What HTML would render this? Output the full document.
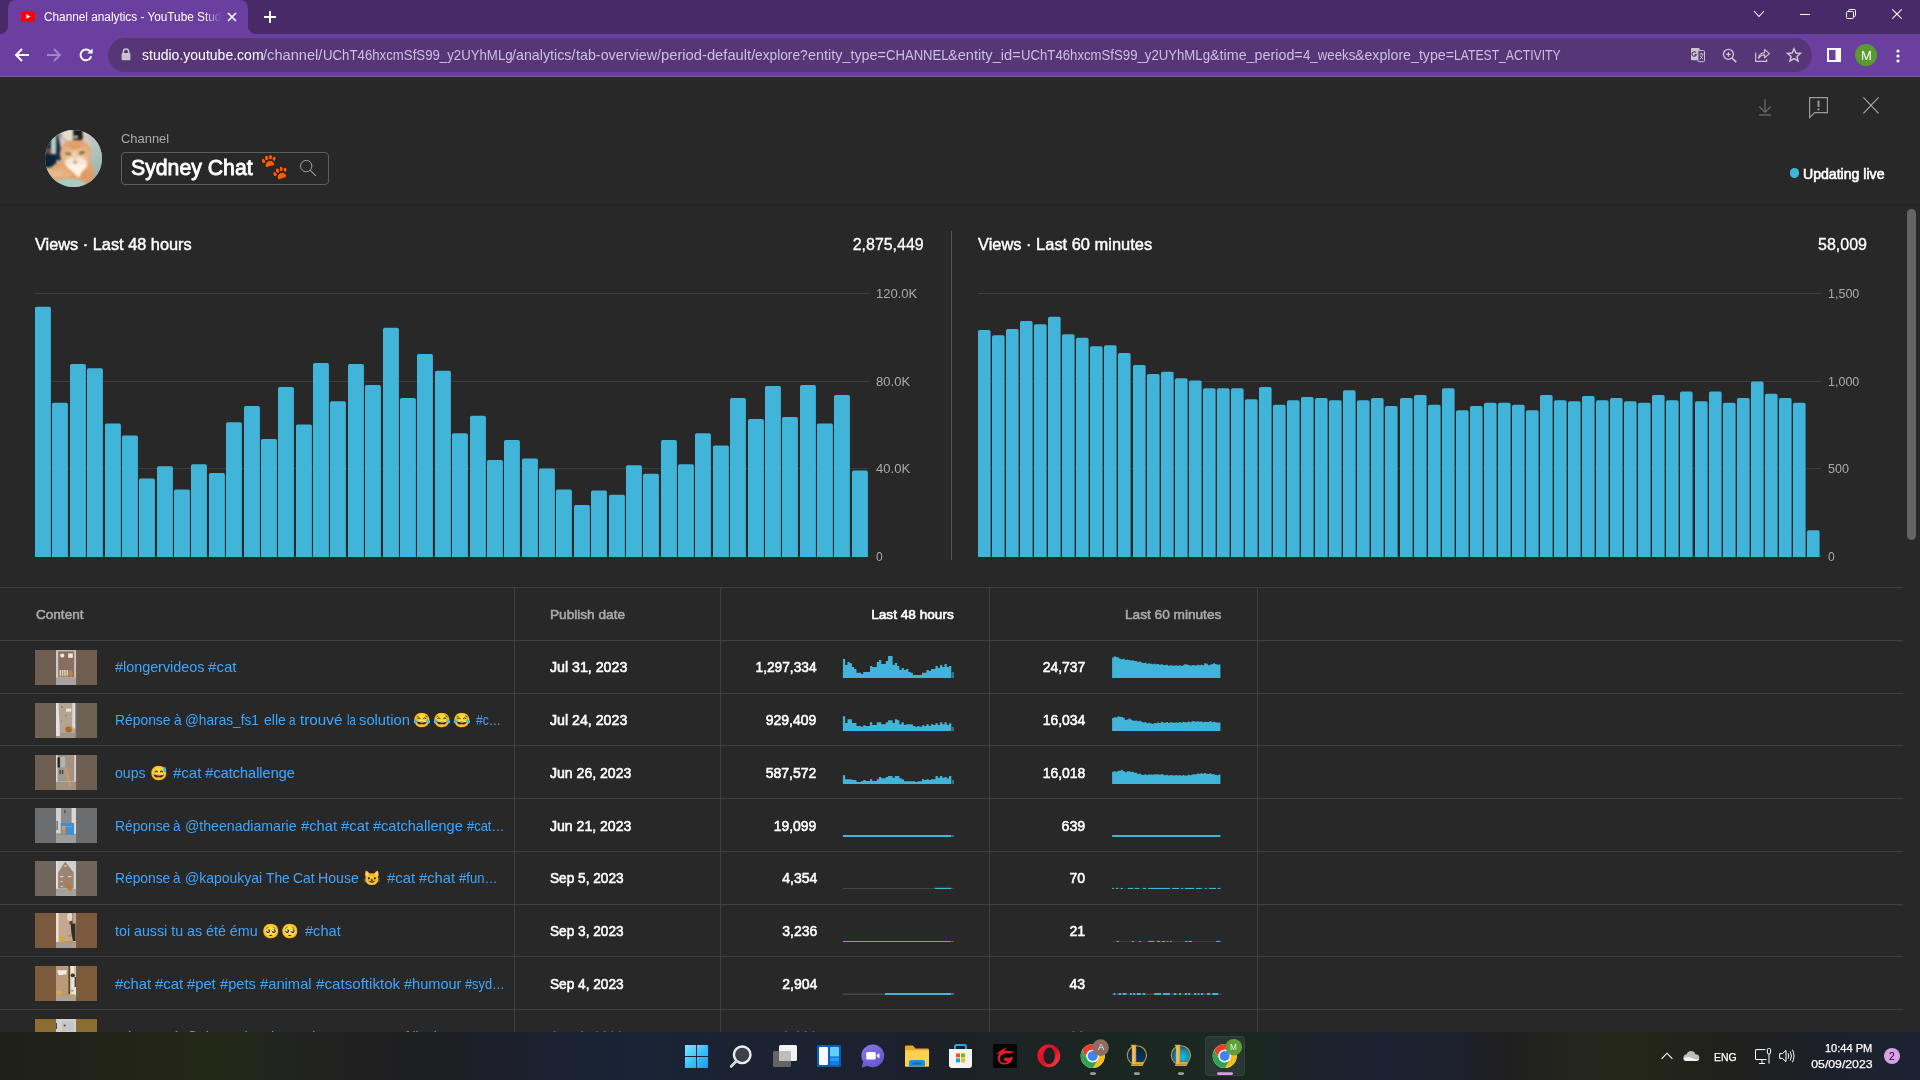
<!DOCTYPE html>
<html lang="en">
<head>
<meta charset="utf-8">
<title>Channel analytics - YouTube Studio</title>
<style>
*{box-sizing:border-box;margin:0;padding:0}
html,body{width:1920px;height:1080px;overflow:hidden;background:#282828}
body{font-family:"Liberation Sans","DejaVu Sans",sans-serif;color:#fff;position:relative;-webkit-font-smoothing:antialiased}
.abs{position:absolute}
.t{position:absolute;white-space:nowrap;line-height:40px;paint-order:stroke fill}
svg{position:absolute;overflow:visible}
/* browser chrome */
#tabstrip{left:0;top:0;width:1920px;height:34px;background:#472a67}
#toolbar{left:0;top:34px;width:1920px;height:42px;background:#6b3fa0}
#toolbarline{left:0;top:76px;width:1920px;height:1px;background:#7e55b0}
#tab{left:8px;top:0;width:240px;height:34px;background:#6b3fa0;border-radius:8px 8px 0 0}
.tabcurve{width:8px;height:8px;top:26px;background:radial-gradient(circle at 0 0,#472a67 7.5px,#6b3fa0 8px)}
#omni{left:108px;top:38px;width:1704px;height:34px;border-radius:17px;background:#573678}
.ui{font-family:"Liberation Sans","DejaVu Sans",sans-serif}
/* page */
#page{left:0;top:77px;width:1920px;height:955px;background:#282828;overflow:hidden}
.hl{position:absolute;height:1px;background:#3e3e3e}
.vl{position:absolute;width:1px;background:#3e3e3e}
.sg span{display:inline-block;white-space:pre}
.sg .emo{text-align:center;font-size:14.2px;position:relative;top:-0.5px;-webkit-text-stroke:0;font-family:"Noto Color Emoji","Liberation Sans","DejaVu Sans",sans-serif}
.paw{font-family:"Noto Color Emoji","Liberation Sans","DejaVu Sans",sans-serif;filter:hue-rotate(184deg) saturate(2.0) brightness(1.2) drop-shadow(0 0 0.5px #000) drop-shadow(0 0 0.5px #000)}
/* taskbar */
#taskbar{left:0;top:1032px;width:1920px;height:48px;background:linear-gradient(90deg,#1f2017 0px,#212318 100px,#242816 220px,#222420 290px,#202020 350px,#1e1f22 440px,#1c202c 510px,#1a2234 580px,#1a2436 640px,#1b2232 760px,#1b212e 880px,#1c2126 960px,#1b2423 1040px,#1a2722 1150px,#1b2822 1260px,#1c222b 1310px,#1c2231 1380px,#1d212d 1450px,#201f20 1510px,#24251b 1570px,#25261a 1640px,#212219 1700px,#1f2020 1760px,#1c2028 1820px,#1b2232 1920px)}
</style>
</head>
<body>
<!-- ===== Browser chrome ===== -->
<div id="tabstrip" class="abs"></div>
<div id="toolbar" class="abs"></div>
<div id="toolbarline" class="abs"></div>
<div id="tab" class="abs"></div>
<div class="abs tabcurve" style="left:0;background:radial-gradient(circle at 0 0,#472a67 7.5px,#6b3fa0 8.5px)"></div>
<div class="abs tabcurve" style="left:248px;background:radial-gradient(circle at 100% 0,#472a67 7.5px,#6b3fa0 8.5px)"></div>
<!-- favicon -->
<svg style="left:21px;top:11px" width="14" height="11" viewBox="0 0 14 11"><rect x="0" y="0.3" width="14" height="10.4" rx="2.6" fill="#f00"/><path d="M5.4 3.1 L9.3 5.5 L5.4 7.9Z" fill="#fff"/></svg>
<div class="t ui" style="top:-3px;font-size:12.5px;color:#fff;left:44.00px;transform-origin:0 24px;transform:scaleX(0.9439);-webkit-mask-image:linear-gradient(90deg,#000 170px,transparent 188px);mask-image:linear-gradient(90deg,#000 170px,transparent 188px);">Channel analytics - YouTube Studio</div>
<svg style="left:227px;top:12px" width="10" height="10" viewBox="0 0 10 10"><path d="M1 1 L9 9 M9 1 L1 9" stroke="#fff" stroke-width="1.6" fill="none"/></svg>
<svg style="left:264px;top:11px" width="12" height="12" viewBox="0 0 12 12"><path d="M6 0 V12 M0 6 H12" stroke="#fff" stroke-width="2" fill="none"/></svg>
<!-- window controls -->
<svg style="left:1753px;top:10px" width="12" height="8" viewBox="0 0 12 8"><path d="M1 1 L6 6.5 L11 1" stroke="#fff" stroke-width="1.1" fill="none"/></svg>
<svg style="left:1800px;top:14px" width="10" height="1" viewBox="0 0 10 1"><rect width="10" height="1" fill="#fff"/></svg>
<svg style="left:1846px;top:9px" width="10" height="10" viewBox="0 0 10 10"><rect x="0.5" y="2.5" width="7" height="7" rx="1.2" stroke="#fff" stroke-width="1" fill="none"/><path d="M2.5 2.5 V1.7 Q2.5 0.5 3.7 0.5 H8.3 Q9.5 0.5 9.5 1.7 V6.3 Q9.5 7.5 8.3 7.5 H7.5" stroke="#fff" stroke-width="1" fill="none"/></svg>
<svg style="left:1892px;top:9px" width="10" height="10" viewBox="0 0 10 10"><path d="M0.3 0.3 L9.7 9.7 M9.7 0.3 L0.3 9.7" stroke="#fff" stroke-width="1.1" fill="none"/></svg>
<!-- nav buttons -->
<svg style="left:15px;top:48px" width="14" height="14" viewBox="0 0 14 14"><path d="M14 7 H2 M7 1 L1 7 L7 13" stroke="#fff" stroke-width="1.9" fill="none"/></svg>
<svg style="left:47px;top:48px" width="14" height="14" viewBox="0 0 14 14"><path d="M0 7 H12 M7 1 L13 7 L7 13" stroke="#a287c6" stroke-width="1.9" fill="none"/></svg>
<svg style="left:79px;top:48px" width="14" height="14" viewBox="0 0 14 14"><path d="M12.2 8.2 A5.4 5.4 0 1 1 10.9 3.2" stroke="#fff" stroke-width="1.9" fill="none"/><path d="M8.3 5.6 H13.6 V0.4Z" fill="#fff"/></svg>
<!-- omnibox -->
<div id="omni" class="abs"></div>
<svg style="left:121px;top:48px" width="10" height="13" viewBox="0 0 10 13"><rect x="0.6" y="5" width="8.8" height="7.2" rx="1" fill="#c9c3d1"/><path d="M2.4 5.4 V3.6 A2.6 2.6 0 0 1 7.6 3.6 V5.4" stroke="#c9c3d1" stroke-width="1.5" fill="none"/></svg>
<div class="t sg ui" style="top:35px;font-size:14.5px;color:#cdbfe0;left:141.70px;"><span style="width:121.60px;transform:scaleX(0.9670);transform-origin:0 25px;color:#fff">studio.youtube.com</span><span style="width:59.40px;transform:scaleX(1.0092);transform-origin:0 25px;">/channel/</span><span style="width:189.60px;transform:scaleX(0.9118);transform-origin:0 25px;">UChT46hxcmSfS99_y2UYhMLg</span><span style="width:63.40px;transform:scaleX(0.9832);transform-origin:0 25px;">/analytics/</span><span style="width:85.00px;transform:scaleX(0.9857);transform-origin:0 25px;">tab-overview/</span><span style="width:94.30px;transform:scaleX(1.0172);transform-origin:0 25px;">period-default/</span><span style="width:52.70px;transform:scaleX(0.9474);transform-origin:0 25px;">explore?</span><span style="width:78.00px;transform:scaleX(0.9922);transform-origin:0 25px;">entity_type=</span><span style="width:62.60px;transform:scaleX(0.9034);transform-origin:0 25px;">CHANNEL</span><span style="width:72.70px;transform:scaleX(1.0075);transform-origin:0 25px;">&amp;entity_id=</span><span style="width:189.00px;transform:scaleX(0.9089);transform-origin:0 25px;">UChT46hxcmSfS99_y2UYhMLg</span><span style="width:92.70px;transform:scaleX(0.9872);transform-origin:0 25px;">&amp;time_period=</span><span style="width:52.30px;transform:scaleX(0.9138);transform-origin:0 25px;">4_weeks</span><span style="width:99.00px;transform:scaleX(0.9785);transform-origin:0 25px;">&amp;explore_type=</span><span style="width:106.60px;transform:scaleX(0.8391);transform-origin:0 25px;">LATEST_ACTIVITY</span></div>
<!-- omnibox right icons -->
<svg style="left:1691px;top:47.8px" width="14" height="14.2" viewBox="0 0 14 14.2"><rect x="0" y="0" width="8.6" height="12.2" rx="1" fill="#c9c6cd"/><rect x="6.9" y="2.6" width="6.6" height="11.1" rx="1" fill="#573678" stroke="#c9c6cd" stroke-width="1"/><path d="M8.6 6 H12.4 M10.4 5 V6 M8.8 11.4 Q11.2 9.6 11.8 6.2 M9.2 7.6 Q10.2 10 12.2 11.4" stroke="#c9c6cd" stroke-width="0.9" fill="none"/><path d="M4.9 4.6 A2.2 2.2 0 1 0 5.3 6.6 H3.6" stroke="#573678" stroke-width="1.1" fill="none"/></svg>
<svg style="left:1722px;top:47.5px" width="15" height="15" viewBox="0 0 15 15"><circle cx="6.4" cy="6.3" r="5" stroke="#c9c6cd" stroke-width="1.35" fill="none"/><path d="M10 10 L14.2 14.2" stroke="#c9c6cd" stroke-width="1.7"/><path d="M4 6.3 H8.8 M6.4 3.9 V8.7" stroke="#c9c6cd" stroke-width="1.2"/></svg>
<svg style="left:1755px;top:48px" width="15" height="14" viewBox="0 0 15 14"><path d="M0.7 4.4 V13.3 H11.6 V11.2" stroke="#c9c6cd" stroke-width="1.2" fill="none"/><path d="M3.6 10.4 Q4 5.2 9.6 4.6 V1.4 L14.4 5.6 L9.6 9.8 V6.9 Q5.8 7 3.6 10.4Z" stroke="#c9c6cd" stroke-width="1.15" fill="none" stroke-linejoin="round"/></svg>
<svg style="left:1786px;top:47px" width="16" height="16" viewBox="0 0 16 16"><path d="M8 1.8 L9.9 6 L14.4 6.4 L11 9.4 L12 13.9 L8 11.5 L4 13.9 L5 9.4 L1.6 6.4 L6.1 6Z" stroke="#c9c6cd" stroke-width="1.5" fill="none" stroke-linejoin="miter"/></svg>
<!-- side panel, avatar, menu -->
<svg style="left:1827px;top:48px" width="14" height="14" viewBox="0 0 14 14"><rect x="0" y="0" width="14" height="14" fill="#fff"/><rect x="2" y="2" width="6.5" height="10" fill="#6b3fa0"/></svg>
<div class="abs" style="left:1855px;top:44px;width:22px;height:22px;border-radius:50%;background:#5a9b30"></div>
<div class="t ui" style="top:36px;font-size:13px;color:#fff;left:1860.60px;transform-origin:0 24px;transform:scaleX(0.9960);">M</div>
<svg style="left:1896.4px;top:48.6px" width="4" height="14" viewBox="0 0 4 14"><circle cx="2" cy="2" r="1.6" fill="#fff"/><circle cx="2" cy="7" r="1.6" fill="#fff"/><circle cx="2" cy="12" r="1.6" fill="#fff"/></svg>

<div id="page" class="abs"></div>
<!-- ===== Page header ===== -->
<div class="abs" style="left:45.2px;top:129.6px;width:57.1px;height:57.7px;border-radius:50%;overflow:hidden;background:#b9c7c0"><svg style="left:-4px;top:-4px;filter:blur(0.8px)" width="65.1" height="65.7" viewBox="19.6 9.6 1063.8 1073.8">
<defs>
<clipPath id="avc"><ellipse cx="551.5" cy="546.5" rx="466.5" ry="471.5"/></clipPath>
<filter id="avb" x="-20%" y="-20%" width="140%" height="140%"><feGaussianBlur stdDeviation="13"/></filter>
<filter id="avb2" x="-20%" y="-20%" width="140%" height="140%"><feGaussianBlur stdDeviation="8"/></filter>
<linearGradient id="avbg" x1="0" y1="0" x2="1" y2="1"><stop offset="0" stop-color="#cfd3c9"/><stop offset="0.55" stop-color="#b9c7c0"/><stop offset="1" stop-color="#7ea59d"/></linearGradient>
<radialGradient id="avhead" cx="0.5" cy="0.62" r="0.6"><stop offset="0" stop-color="#f3dcc4"/><stop offset="0.45" stop-color="#ecc09a"/><stop offset="1" stop-color="#e0a06c"/></radialGradient>
</defs>
<g>
<rect x="0" y="0" width="1100" height="1100" fill="url(#avbg)"/>
<g>
<rect x="60" y="130" width="130" height="560" fill="#10263a"/>
<rect x="180" y="170" width="95" height="400" fill="#b7cbc6"/>
<rect x="268" y="150" width="80" height="420" fill="#13283c"/>
<rect x="90" y="375" width="95" height="90" fill="#6f4b3c"/>
<rect x="70" y="470" width="200" height="200" fill="#0b2239"/>
<rect x="385" y="60" width="170" height="190" fill="#e6decd"/>
<rect x="545" y="60" width="160" height="185" fill="#1b1a19"/>
<ellipse cx="590" cy="190" rx="42" ry="20" fill="#dcdcd9"/>
<rect x="700" y="60" width="120" height="120" fill="#dad3c7"/>
<path d="M296 150 L470 255 L345 400Z" fill="#c3b0a9"/>
<path d="M330 200 L430 265 L360 350Z" fill="#d9c8c2"/>
<path d="M680 230 L795 135 L835 340Z" fill="#dcc6bc"/>
<path d="M120 780 Q180 640 350 590 L830 590 Q900 700 885 870 L700 960 L260 905Z" fill="#e3a36e"/>
<ellipse cx="585" cy="465" rx="258" ry="232" fill="url(#avhead)"/>
<ellipse cx="575" cy="320" rx="120" ry="62" fill="#e3a06a"/>
<ellipse cx="590" cy="610" rx="185" ry="85" fill="#f6e9da"/>
<path d="M410 650 L790 640 L640 850Z" fill="#fef4e6"/>
<ellipse cx="290" cy="770" rx="160" ry="78" fill="#ebb88c"/>
<ellipse cx="430" cy="800" rx="90" ry="50" fill="#e9b080"/>
<ellipse cx="770" cy="830" rx="105" ry="115" fill="#df9d68"/>
<ellipse cx="470" cy="965" rx="275" ry="98" fill="#aacac3"/>
</g>
<g>
<ellipse cx="465" cy="462" rx="50" ry="22" fill="#7a6524" transform="rotate(12 465 462)"/>
<ellipse cx="684" cy="448" rx="52" ry="23" fill="#6f5d20" transform="rotate(-16 684 448)"/>
<path d="M385 470 L540 490 M610 480 L780 455" stroke="#cf9a63" stroke-width="10" fill="none"/>
<path d="M538 585 L618 585 L578 636Z" fill="#cf8170"/>
<path d="M578 500 V590" stroke="#e9c3a0" stroke-width="34"/>
<path d="M535 340 V410 M575 335 V415 M615 340 V410 M495 350 V400 M655 350 V400" stroke="#cf8d55" stroke-width="11"/>
<path d="M200 720 Q300 690 400 740 M640 880 Q740 800 860 830" stroke="#d18e57" stroke-width="12" fill="none"/>
</g>
</g>
</svg></div>

<div class="t" style="top:119px;font-size:13.5px;color:#aaa;left:121.30px;transform-origin:0 24px;transform:scaleX(0.9583);">Channel</div>
<div class="abs" style="left:121px;top:152px;width:208px;height:33px;border:1px solid #5e5e5e;border-radius:4px"></div>
<div class="t sg" style="top:148px;font-size:22.5px;color:#fff;-webkit-text-stroke:0.9px #fff;left:131.20px;"><span style="width:121.60px;transform:scaleX(0.9439);transform-origin:0 27px;">Sydney Chat</span><span style="width:7.20px;"> </span><span class="paw" style="width:28.00px;font-size:23px;text-align:center;position:relative;top:-1.2px;left:0;-webkit-text-stroke:0;transform:scaleY(1.1)">🐾</span></div>
<svg style="left:299px;top:159px" width="18" height="18" viewBox="0 0 18 18"><circle cx="7.2" cy="7.1" r="5.7" stroke="#a0a0a0" stroke-width="1" fill="none"/><path d="M11.3 11.3 L16.8 16.8" stroke="#a0a0a0" stroke-width="1.1"/></svg>
<svg style="left:1758px;top:98px" width="14" height="18" viewBox="0 0 14 18"><path d="M7 1 V14 M1.3 8.6 L7 14.3 L12.7 8.6" stroke="#717171" stroke-width="1.1" fill="none"/><path d="M1 17 H13" stroke="#717171" stroke-width="1.2"/></svg>
<svg style="left:1809px;top:97px" width="19" height="22" viewBox="0 0 19 22"><path d="M0.6 0.6 H18.4 V15.6 H5.6 L0.6 20.6Z" stroke="#9a9a9a" stroke-width="1.2" fill="none"/><path d="M9.5 3.6 V10" stroke="#9a9a9a" stroke-width="2"/><path d="M9.5 11.4 V13.4" stroke="#9a9a9a" stroke-width="2"/></svg>
<svg style="left:1863px;top:97px" width="16" height="17" viewBox="0 0 16 17"><path d="M0.4 0.4 L15.6 16.4 M15.6 0.4 L0.4 16.4" stroke="#aaa" stroke-width="1.1" fill="none"/></svg>
<div class="abs" style="left:1789.6px;top:168.4px;width:9.2px;height:9.2px;border-radius:50%;background:#41b4d9"></div>
<div class="t" style="top:154px;font-size:14.5px;color:#fff;-webkit-text-stroke:0.6px #fff;left:1802.80px;transform-origin:0 25px;transform:scaleX(0.9722);">Updating live</div>
<div class="abs" style="left:0;top:203px;width:1920px;height:4px;background:linear-gradient(180deg,rgba(0,0,0,0),rgba(0,0,0,0.09) 60%,rgba(0,0,0,0))"></div>
<div class="abs" style="left:1907px;top:209px;width:9px;height:331px;border-radius:4.5px;background:#646464"></div>
<!-- ===== Charts ===== -->
<div class="t" style="top:225px;font-size:17px;color:#fff;-webkit-text-stroke:0.45px #fff;left:35.30px;transform-origin:0 25px;transform:scaleX(0.9603);">Views · Last 48 hours</div>
<div class="t" style="top:225px;font-size:17px;color:#fff;-webkit-text-stroke:0.3px #fff;right:995.90px;transform-origin:100% 25px;transform:scaleX(0.9373);">2,875,449</div>
<div class="t" style="top:225px;font-size:17px;color:#fff;-webkit-text-stroke:0.45px #fff;left:978.40px;transform-origin:0 25px;transform:scaleX(0.9663);">Views · Last 60 minutes</div>
<div class="t" style="top:225px;font-size:17px;color:#fff;-webkit-text-stroke:0.3px #fff;right:52.70px;transform-origin:100% 25px;transform:scaleX(0.9423);">58,009</div>
<div class="vl" style="left:951px;top:231px;height:329px;background:#555"></div>
<div class="hl" style="left:35px;top:292.5px;width:833.5px;background:#3d3d3d"></div>
<div class="t" style="top:274px;font-size:13.5px;color:#aaa;left:875.70px;transform-origin:0 24px;transform:scaleX(0.9627);">120.0K</div>
<div class="hl" style="left:35px;top:380.5px;width:833.5px;background:#3d3d3d"></div>
<div class="t" style="top:362px;font-size:13.5px;color:#aaa;left:875.70px;transform-origin:0 24px;transform:scaleX(0.9665);">80.0K</div>
<div class="hl" style="left:35px;top:468.0px;width:833.5px;background:#3d3d3d"></div>
<div class="t" style="top:449px;font-size:13.5px;color:#aaa;left:875.70px;transform-origin:0 24px;transform:scaleX(0.9665);">40.0K</div>
<div class="hl" style="left:35px;top:555.5px;width:833.5px;background:#3d3d3d"></div>
<div class="t" style="top:537px;font-size:13.5px;color:#aaa;left:875.70px;transform-origin:0 24px;transform:scaleX(0.8915);">0</div>
<div class="hl" style="left:978px;top:292.5px;width:842.5px;background:#3d3d3d"></div>
<div class="t" style="top:274px;font-size:13.5px;color:#aaa;left:1828.00px;transform-origin:0 24px;transform:scaleX(0.9261);">1,500</div>
<div class="hl" style="left:978px;top:380.5px;width:842.5px;background:#3d3d3d"></div>
<div class="t" style="top:362px;font-size:13.5px;color:#aaa;left:1828.00px;transform-origin:0 24px;transform:scaleX(0.9261);">1,000</div>
<div class="hl" style="left:978px;top:468.0px;width:842.5px;background:#3d3d3d"></div>
<div class="t" style="top:449px;font-size:13.5px;color:#aaa;left:1828.00px;transform-origin:0 24px;transform:scaleX(0.9320);">500</div>
<div class="hl" style="left:978px;top:555.5px;width:842.5px;background:#3d3d3d"></div>
<div class="t" style="top:537px;font-size:13.5px;color:#aaa;left:1828.00px;transform-origin:0 24px;transform:scaleX(0.8915);">0</div>
<svg style="left:0;top:0" width="1920" height="600" viewBox="0 0 1920 600"><path d="M35.00 557.0V308.5Q35.00 306.8 36.70 306.8H49.20Q50.90 306.8 50.90 308.5V557.0ZM52.00 557.0V404.4Q52.00 402.7 53.70 402.7H66.20Q67.90 402.7 67.90 404.4V557.0ZM70.00 557.0V365.7Q70.00 364.0 71.70 364.0H84.20Q85.90 364.0 85.90 365.7V557.0ZM87.00 557.0V370.0Q87.00 368.3 88.70 368.3H101.20Q102.90 368.3 102.90 370.0V557.0ZM105.00 557.0V425.1Q105.00 423.4 106.70 423.4H119.20Q120.90 423.4 120.90 425.1V557.0ZM122.00 557.0V437.1Q122.00 435.4 123.70 435.4H136.20Q137.90 435.4 137.90 437.1V557.0ZM139.00 557.0V480.1Q139.00 478.4 140.70 478.4H153.20Q154.90 478.4 154.90 480.1V557.0ZM157.00 557.0V468.0Q157.00 466.3 158.70 466.3H171.20Q172.90 466.3 172.90 468.0V557.0ZM174.00 557.0V491.1Q174.00 489.4 175.70 489.4H188.20Q189.90 489.4 189.90 491.1V557.0ZM191.00 557.0V465.9Q191.00 464.2 192.70 464.2H205.20Q206.90 464.2 206.90 465.9V557.0ZM209.00 557.0V474.7Q209.00 473.0 210.70 473.0H223.20Q224.90 473.0 224.90 474.7V557.0ZM226.00 557.0V424.0Q226.00 422.3 227.70 422.3H240.20Q241.90 422.3 241.90 424.0V557.0ZM244.00 557.0V407.6Q244.00 405.9 245.70 405.9H258.20Q259.90 405.9 259.90 407.6V557.0ZM261.00 557.0V440.6Q261.00 438.9 262.70 438.9H275.20Q276.90 438.9 276.90 440.6V557.0ZM278.00 557.0V388.8Q278.00 387.1 279.70 387.1H292.20Q293.90 387.1 293.90 388.8V557.0ZM296.00 557.0V426.1Q296.00 424.4 297.70 424.4H310.20Q311.90 424.4 311.90 426.1V557.0ZM313.00 557.0V364.7Q313.00 363.0 314.70 363.0H327.20Q328.90 363.0 328.90 364.7V557.0ZM330.00 557.0V403.0Q330.00 401.3 331.70 401.3H344.20Q345.90 401.3 345.90 403.0V557.0ZM348.00 557.0V365.7Q348.00 364.0 349.70 364.0H362.20Q363.90 364.0 363.90 365.7V557.0ZM365.00 557.0V386.7Q365.00 385.0 366.70 385.0H379.20Q380.90 385.0 380.90 386.7V557.0ZM383.00 557.0V329.5Q383.00 327.8 384.70 327.8H397.20Q398.90 327.8 398.90 329.5V557.0ZM400.00 557.0V399.8Q400.00 398.1 401.70 398.1H414.20Q415.90 398.1 415.90 399.8V557.0ZM417.00 557.0V355.8Q417.00 354.1 418.70 354.1H431.20Q432.90 354.1 432.90 355.8V557.0ZM435.00 557.0V372.4Q435.00 370.7 436.70 370.7H449.20Q450.90 370.7 450.90 372.4V557.0ZM452.00 557.0V435.0Q452.00 433.3 453.70 433.3H466.20Q467.90 433.3 467.90 435.0V557.0ZM470.00 557.0V417.5Q470.00 415.8 471.70 415.8H484.20Q485.90 415.8 485.90 417.5V557.0ZM487.00 557.0V461.6Q487.00 459.9 488.70 459.9H501.20Q502.90 459.9 502.90 461.6V557.0ZM504.00 557.0V441.7Q504.00 440.0 505.70 440.0H518.20Q519.90 440.0 519.90 441.7V557.0ZM522.00 557.0V460.2Q522.00 458.5 523.70 458.5H536.20Q537.90 458.5 537.90 460.2V557.0ZM539.00 557.0V470.2Q539.00 468.5 540.70 468.5H553.20Q554.90 468.5 554.90 470.2V557.0ZM556.00 557.0V491.1Q556.00 489.4 557.70 489.4H570.20Q571.90 489.4 571.90 491.1V557.0ZM574.00 557.0V506.7Q574.00 505.0 575.70 505.0H588.20Q589.90 505.0 589.90 506.7V557.0ZM591.00 557.0V492.2Q591.00 490.5 592.70 490.5H605.20Q606.90 490.5 606.90 492.2V557.0ZM609.00 557.0V496.5Q609.00 494.8 610.70 494.8H623.20Q624.90 494.8 624.90 496.5V557.0ZM626.00 557.0V466.9Q626.00 465.2 627.70 465.2H640.20Q641.90 465.2 641.90 466.9V557.0ZM643.00 557.0V475.5Q643.00 473.8 644.70 473.8H657.20Q658.90 473.8 658.90 475.5V557.0ZM661.00 557.0V441.7Q661.00 440.0 662.70 440.0H675.20Q676.90 440.0 676.90 441.7V557.0ZM678.00 557.0V465.9Q678.00 464.2 679.70 464.2H692.20Q693.90 464.2 693.90 465.9V557.0ZM695.00 557.0V435.0Q695.00 433.3 696.70 433.3H709.20Q710.90 433.3 710.90 435.0V557.0ZM713.00 557.0V447.1Q713.00 445.4 714.70 445.4H727.20Q728.90 445.4 728.90 447.1V557.0ZM730.00 557.0V399.8Q730.00 398.1 731.70 398.1H744.20Q745.90 398.1 745.90 399.8V557.0ZM748.00 557.0V420.8Q748.00 419.1 749.70 419.1H762.20Q763.90 419.1 763.90 420.8V557.0ZM765.00 557.0V387.7Q765.00 386.0 766.70 386.0H779.20Q780.90 386.0 780.90 387.7V557.0ZM782.00 557.0V418.6Q782.00 416.9 783.70 416.9H796.20Q797.90 416.9 797.90 418.6V557.0ZM800.00 557.0V386.7Q800.00 385.0 801.70 385.0H814.20Q815.90 385.0 815.90 386.7V557.0ZM817.00 557.0V425.1Q817.00 423.4 818.70 423.4H831.20Q832.90 423.4 832.90 425.1V557.0ZM834.00 557.0V396.6Q834.00 394.9 835.70 394.9H848.20Q849.90 394.9 849.90 396.6V557.0ZM852.00 557.0V472.3Q852.00 470.6 853.70 470.6H866.20Q867.90 470.6 867.90 472.3V557.0Z" fill="#41b4d9"/></svg>
<svg style="left:0;top:0" width="1920" height="600" viewBox="0 0 1920 600"><path d="M978.00 557.0V331.6Q978.00 329.9 979.70 329.9H988.90Q990.60 329.9 990.60 331.6V557.0ZM992.00 557.0V337.0Q992.00 335.3 993.70 335.3H1002.90Q1004.60 335.3 1004.60 337.0V557.0ZM1006.00 557.0V330.6Q1006.00 328.9 1007.70 328.9H1016.90Q1018.60 328.9 1018.60 330.6V557.0ZM1020.00 557.0V322.8Q1020.00 321.1 1021.70 321.1H1030.90Q1032.60 321.1 1032.60 322.8V557.0ZM1034.00 557.0V326.0Q1034.00 324.3 1035.70 324.3H1044.90Q1046.60 324.3 1046.60 326.0V557.0ZM1048.00 557.0V318.5Q1048.00 316.8 1049.70 316.8H1058.90Q1060.60 316.8 1060.60 318.5V557.0ZM1062.00 557.0V335.9Q1062.00 334.2 1063.70 334.2H1072.90Q1074.60 334.2 1074.60 335.9V557.0ZM1076.00 557.0V339.4Q1076.00 337.7 1077.70 337.7H1086.90Q1088.60 337.7 1088.60 339.4V557.0ZM1090.00 557.0V348.0Q1090.00 346.3 1091.70 346.3H1100.90Q1102.60 346.3 1102.60 348.0V557.0ZM1104.00 557.0V346.9Q1104.00 345.2 1105.70 345.2H1114.90Q1116.60 345.2 1116.60 346.9V557.0ZM1118.00 557.0V354.7Q1118.00 353.0 1119.70 353.0H1128.90Q1130.60 353.0 1130.60 354.7V557.0ZM1133.00 557.0V366.8Q1133.00 365.1 1134.70 365.1H1143.90Q1145.60 365.1 1145.60 366.8V557.0ZM1147.00 557.0V375.7Q1147.00 374.0 1148.70 374.0H1157.90Q1159.60 374.0 1159.60 375.7V557.0ZM1161.00 557.0V373.5Q1161.00 371.8 1162.70 371.8H1171.90Q1173.60 371.8 1173.60 373.5V557.0ZM1175.00 557.0V380.0Q1175.00 378.3 1176.70 378.3H1185.90Q1187.60 378.3 1187.60 380.0V557.0ZM1189.00 557.0V382.1Q1189.00 380.4 1190.70 380.4H1199.90Q1201.60 380.4 1201.60 382.1V557.0ZM1203.00 557.0V389.9Q1203.00 388.2 1204.70 388.2H1213.90Q1215.60 388.2 1215.60 389.9V557.0ZM1217.00 557.0V389.9Q1217.00 388.2 1218.70 388.2H1227.90Q1229.60 388.2 1229.60 389.9V557.0ZM1231.00 557.0V389.9Q1231.00 388.2 1232.70 388.2H1241.90Q1243.60 388.2 1243.60 389.9V557.0ZM1245.00 557.0V400.9Q1245.00 399.2 1246.70 399.2H1255.90Q1257.60 399.2 1257.60 400.9V557.0ZM1259.00 557.0V388.8Q1259.00 387.1 1260.70 387.1H1269.90Q1271.60 387.1 1271.60 388.8V557.0ZM1273.00 557.0V406.5Q1273.00 404.8 1274.70 404.8H1283.90Q1285.60 404.8 1285.60 406.5V557.0ZM1287.00 557.0V402.0Q1287.00 400.3 1288.70 400.3H1297.90Q1299.60 400.3 1299.60 402.0V557.0ZM1301.00 557.0V398.7Q1301.00 397.0 1302.70 397.0H1311.90Q1313.60 397.0 1313.60 398.7V557.0ZM1315.00 557.0V399.8Q1315.00 398.1 1316.70 398.1H1325.90Q1327.60 398.1 1327.60 399.8V557.0ZM1329.00 557.0V402.0Q1329.00 400.3 1330.70 400.3H1339.90Q1341.60 400.3 1341.60 402.0V557.0ZM1343.00 557.0V392.0Q1343.00 390.3 1344.70 390.3H1353.90Q1355.60 390.3 1355.60 392.0V557.0ZM1357.00 557.0V402.0Q1357.00 400.3 1358.70 400.3H1367.90Q1369.60 400.3 1369.60 402.0V557.0ZM1371.00 557.0V399.8Q1371.00 398.1 1372.70 398.1H1381.90Q1383.60 398.1 1383.60 399.8V557.0ZM1385.00 557.0V407.6Q1385.00 405.9 1386.70 405.9H1395.90Q1397.60 405.9 1397.60 407.6V557.0ZM1400.00 557.0V399.8Q1400.00 398.1 1401.70 398.1H1410.90Q1412.60 398.1 1412.60 399.8V557.0ZM1414.00 557.0V396.6Q1414.00 394.9 1415.70 394.9H1424.90Q1426.60 394.9 1426.60 396.6V557.0ZM1428.00 557.0V406.5Q1428.00 404.8 1429.70 404.8H1438.90Q1440.60 404.8 1440.60 406.5V557.0ZM1442.00 557.0V389.9Q1442.00 388.2 1443.70 388.2H1452.90Q1454.60 388.2 1454.60 389.9V557.0ZM1456.00 557.0V411.9Q1456.00 410.2 1457.70 410.2H1466.90Q1468.60 410.2 1468.60 411.9V557.0ZM1470.00 557.0V407.6Q1470.00 405.9 1471.70 405.9H1480.90Q1482.60 405.9 1482.60 407.6V557.0ZM1484.00 557.0V404.4Q1484.00 402.7 1485.70 402.7H1494.90Q1496.60 402.7 1496.60 404.4V557.0ZM1498.00 557.0V404.4Q1498.00 402.7 1499.70 402.7H1508.90Q1510.60 402.7 1510.60 404.4V557.0ZM1512.00 557.0V406.5Q1512.00 404.8 1513.70 404.8H1522.90Q1524.60 404.8 1524.60 406.5V557.0ZM1526.00 557.0V411.9Q1526.00 410.2 1527.70 410.2H1536.90Q1538.60 410.2 1538.60 411.9V557.0ZM1540.00 557.0V396.6Q1540.00 394.9 1541.70 394.9H1550.90Q1552.60 394.9 1552.60 396.6V557.0ZM1554.00 557.0V402.0Q1554.00 400.3 1555.70 400.3H1564.90Q1566.60 400.3 1566.60 402.0V557.0ZM1568.00 557.0V403.0Q1568.00 401.3 1569.70 401.3H1578.90Q1580.60 401.3 1580.60 403.0V557.0ZM1582.00 557.0V397.7Q1582.00 396.0 1583.70 396.0H1592.90Q1594.60 396.0 1594.60 397.7V557.0ZM1596.00 557.0V402.0Q1596.00 400.3 1597.70 400.3H1606.90Q1608.60 400.3 1608.60 402.0V557.0ZM1610.00 557.0V399.8Q1610.00 398.1 1611.70 398.1H1620.90Q1622.60 398.1 1622.60 399.8V557.0ZM1624.00 557.0V403.0Q1624.00 401.3 1625.70 401.3H1634.90Q1636.60 401.3 1636.60 403.0V557.0ZM1638.00 557.0V404.4Q1638.00 402.7 1639.70 402.7H1648.90Q1650.60 402.7 1650.60 404.4V557.0ZM1652.00 557.0V396.6Q1652.00 394.9 1653.70 394.9H1662.90Q1664.60 394.9 1664.60 396.6V557.0ZM1666.00 557.0V402.0Q1666.00 400.3 1667.70 400.3H1676.90Q1678.60 400.3 1678.60 402.0V557.0ZM1680.00 557.0V393.1Q1680.00 391.4 1681.70 391.4H1690.90Q1692.60 391.4 1692.60 393.1V557.0ZM1695.00 557.0V403.0Q1695.00 401.3 1696.70 401.3H1705.90Q1707.60 401.3 1707.60 403.0V557.0ZM1709.00 557.0V393.1Q1709.00 391.4 1710.70 391.4H1719.90Q1721.60 391.4 1721.60 393.1V557.0ZM1723.00 557.0V404.4Q1723.00 402.7 1724.70 402.7H1733.90Q1735.60 402.7 1735.60 404.4V557.0ZM1737.00 557.0V399.8Q1737.00 398.1 1738.70 398.1H1747.90Q1749.60 398.1 1749.60 399.8V557.0ZM1751.00 557.0V383.2Q1751.00 381.5 1752.70 381.5H1761.90Q1763.60 381.5 1763.60 383.2V557.0ZM1765.00 557.0V395.5Q1765.00 393.8 1766.70 393.8H1775.90Q1777.60 393.8 1777.60 395.5V557.0ZM1779.00 557.0V399.8Q1779.00 398.1 1780.70 398.1H1789.90Q1791.60 398.1 1791.60 399.8V557.0ZM1793.00 557.0V404.4Q1793.00 402.7 1794.70 402.7H1803.90Q1805.60 402.7 1805.60 404.4V557.0ZM1807.00 557.0V531.9Q1807.00 530.2 1808.70 530.2H1817.90Q1819.60 530.2 1819.60 531.9V557.0Z" fill="#41b4d9"/></svg>
<!-- ===== Table ===== -->
<div class="hl" style="left:0;top:587px;width:1903px;background:#3f3f3f"></div>
<div class="hl" style="left:0;top:640px;width:1903px;background:#3f3f3f"></div>
<div class="hl" style="left:0;top:693px;width:1903px;background:#3f3f3f"></div>
<div class="hl" style="left:0;top:745px;width:1903px;background:#3f3f3f"></div>
<div class="hl" style="left:0;top:798px;width:1903px;background:#3f3f3f"></div>
<div class="hl" style="left:0;top:851px;width:1903px;background:#3f3f3f"></div>
<div class="hl" style="left:0;top:904px;width:1903px;background:#3f3f3f"></div>
<div class="hl" style="left:0;top:956px;width:1903px;background:#3f3f3f"></div>
<div class="hl" style="left:0;top:1009px;width:1903px;background:#3f3f3f"></div>
<div class="vl" style="left:514px;top:587px;height:445px;background:#3f3f3f"></div>
<div class="vl" style="left:720px;top:587px;height:445px;background:#3f3f3f"></div>
<div class="vl" style="left:989px;top:587px;height:445px;background:#3f3f3f"></div>
<div class="vl" style="left:1257px;top:587px;height:445px;background:#3f3f3f"></div>
<div class="t" style="top:595px;font-size:13.5px;color:#aaa;-webkit-text-stroke:0.55px #aaa;left:35.50px;transform-origin:0 24px;transform:scaleX(1.0043);">Content</div>
<div class="t" style="top:595px;font-size:13.5px;color:#aaa;-webkit-text-stroke:0.55px #aaa;left:550.00px;transform-origin:0 24px;transform:scaleX(1.0093);">Publish date</div>
<div class="t" style="top:595px;font-size:13.5px;color:#fff;-webkit-text-stroke:0.6px #fff;right:966.70px;transform-origin:100% 24px;transform:scaleX(1.0096);">Last 48 hours</div>
<div class="t" style="top:595px;font-size:13.5px;color:#aaa;-webkit-text-stroke:0.55px #aaa;right:698.70px;transform-origin:100% 24px;transform:scaleX(1.0104);">Last 60 minutes</div>
<svg style="left:35px;top:650px" width="62" height="35" viewBox="0 0 62 35"><defs><clipPath id="tc0"><rect x="21" y="0" width="20.2" height="35"/></clipPath></defs><rect width="62" height="35" fill="#705e50"/><g clip-path="url(#tc0)"><g style="filter:blur(0.45px)"><rect x="21" y="0" width="20.2" height="35" fill="#8a6f61"/><rect x="21" y="27" width="20.2" height="8" fill="#a8a3a0"/><rect x="21" y="0" width="2.2" height="27.5" fill="#cbc8c6"/><rect x="39.1" y="0" width="2.1" height="27.5" fill="#c6c3c1"/><rect x="21" y="0" width="20.2" height="1.4" fill="#bfbab6"/><ellipse cx="27.2" cy="5.6" rx="2.1" ry="2.1" fill="#ebe7db"/><rect x="33.2" y="3.4" width="4.6" height="4.4" fill="#ece8dd"/><rect x="24.6" y="20" width="1.5" height="6.6" fill="#e3d6bd"/><rect x="26.9" y="20" width="1.5" height="6.6" fill="#e3d6bd"/><rect x="29.2" y="20" width="1.5" height="6.6" fill="#e3d6bd"/><rect x="31.5" y="20" width="1.5" height="6.6" fill="#e3d6bd"/><rect x="24.4" y="25.6" width="9" height="1.2" fill="#b8894f"/><ellipse cx="35.8" cy="23.6" rx="2.2" ry="3.4" fill="#b98250"/></g></g></svg>
<div class="t sg" style="top:647px;font-size:14.5px;color:#3ea6ff;left:114.70px;"><span style="width:89.40px;transform:scaleX(0.9901);transform-origin:0 25px;">#longervideos</span><span style="width:4.30px;"> </span><span style="width:28.50px;transform:scaleX(1.0393);transform-origin:0 25px;">#cat</span></div>
<div class="t" style="top:647px;font-size:14.5px;color:#fff;-webkit-text-stroke:0.55px #fff;left:549.80px;transform-origin:0 25px;transform:scaleX(0.9783);">Jul 31, 2023</div>
<div class="t" style="top:647px;font-size:14.5px;color:#fff;-webkit-text-stroke:0.55px #fff;right:1103.20px;transform-origin:100% 25px;transform:scaleX(0.9455);">1,297,334</div>
<div class="t" style="top:647px;font-size:14.5px;color:#fff;-webkit-text-stroke:0.55px #fff;right:835.00px;transform-origin:100% 25px;transform:scaleX(0.9626);">24,737</div>
<svg style="left:35px;top:703px" width="62" height="35" viewBox="0 0 62 35"><defs><clipPath id="tc1"><rect x="21" y="0" width="20.2" height="35"/></clipPath></defs><rect width="62" height="35" fill="#6e6254"/><g clip-path="url(#tc1)"><g style="filter:blur(0.45px)"><rect x="21" y="0" width="20.2" height="35" fill="#b5a590"/><rect x="21" y="30" width="20.2" height="5" fill="#9f958a"/><path d="M21 0H23.4L25 33H21Z" fill="#e3e3e5"/><rect x="37.3" y="0" width="3" height="25.5" fill="#dcdde1"/><rect x="40.3" y="0" width="1" height="35" fill="#8b8378"/><rect x="31" y="5.6" width="5.2" height="3" fill="#ece5d9"/><rect x="26.2" y="3.4" width="1.6" height="1.4" fill="#7d7466"/><rect x="30.4" y="12" width="1.4" height="1.4" fill="#7d7466"/><rect x="26" y="17.6" width="1.2" height="1.2" fill="#81786a"/><ellipse cx="33.6" cy="26.6" rx="3.4" ry="3" fill="#a9672e"/><ellipse cx="36" cy="25" rx="1.6" ry="1.6" fill="#b87a3f"/></g></g></svg>
<div class="t sg" style="top:700px;font-size:14.5px;color:#3ea6ff;left:114.70px;"><span style="width:59.20px;transform:scaleX(0.9561);transform-origin:0 25px;">Réponse </span><span style="width:11.40px;transform:scaleX(0.9550);transform-origin:0 25px;">à </span><span style="width:78.30px;transform:scaleX(0.9425);transform-origin:0 25px;">@haras_fs1 </span><span style="width:25.90px;transform:scaleX(0.9700);transform-origin:0 25px;">elle </span><span style="width:10.90px;transform:scaleX(0.8062);transform-origin:0 25px;">a </span><span style="width:46.20px;transform:scaleX(1.0518);transform-origin:0 25px;">trouvé </span><span style="width:12.00px;transform:scaleX(0.7800);transform-origin:0 25px;">la </span><span style="width:54.25px;transform:scaleX(1.0183);transform-origin:0 25px;">solution </span><span class="emo" style="width:19.70px;">😂</span><span class="emo" style="width:19.70px;">😂</span><span class="emo" style="width:19.70px;">😂</span><span style="width:3.85px;"> </span><span style="width:25.00px;transform:scaleX(0.8381);transform-origin:0 25px;">#c…</span></div>
<div class="t" style="top:700px;font-size:14.5px;color:#fff;-webkit-text-stroke:0.55px #fff;left:549.80px;transform-origin:0 25px;transform:scaleX(0.9783);">Jul 24, 2023</div>
<div class="t" style="top:700px;font-size:14.5px;color:#fff;-webkit-text-stroke:0.55px #fff;right:1103.20px;transform-origin:100% 25px;transform:scaleX(0.9672);">929,409</div>
<div class="t" style="top:700px;font-size:14.5px;color:#fff;-webkit-text-stroke:0.55px #fff;right:835.00px;transform-origin:100% 25px;transform:scaleX(0.9626);">16,034</div>
<svg style="left:35px;top:755px" width="62" height="35" viewBox="0 0 62 35"><defs><clipPath id="tc2"><rect x="21" y="0" width="20.2" height="35"/></clipPath></defs><rect width="62" height="35" fill="#6f5f52"/><g clip-path="url(#tc2)"><g style="filter:blur(0.45px)"><rect x="21" y="0" width="20.2" height="35" fill="#a49383"/><rect x="21" y="27" width="20.2" height="8" fill="#a39382"/><rect x="21" y="0" width="1.6" height="27" fill="#d9d6d1"/><rect x="39.2" y="0" width="2" height="27" fill="#d4d0ca"/><rect x="22.6" y="2.4" width="2.2" height="10" fill="#1e1e1e"/><rect x="25.6" y="2" width="4.6" height="10.4" fill="#abb7bc"/><rect x="23.2" y="13.4" width="8.2" height="12.4" fill="#9c9892"/><rect x="24.6" y="15" width="1.2" height="4" fill="#2c2c2c"/><rect x="27" y="15" width="1.2" height="4" fill="#3a3a3a"/><path d="M29.4 13L32 13L36.2 30.4L34 31Z" fill="#c79a66"/><rect x="22" y="26" width="18" height="1" fill="#b9ad9e"/></g></g></svg>
<div class="t sg" style="top:753px;font-size:14.5px;color:#3ea6ff;left:114.70px;"><span style="width:30.60px;transform:scaleX(0.9729);transform-origin:0 25px;">oups</span><span style="width:3.85px;"> </span><span class="emo" style="width:19.70px;">😅</span><span style="width:4.45px;"> </span><span style="width:32.10px;transform:scaleX(1.0363);transform-origin:0 25px;">#cat </span><span style="width:88.90px;transform:scaleX(1.0000);transform-origin:0 25px;">#catchallenge</span></div>
<div class="t" style="top:753px;font-size:14.5px;color:#fff;-webkit-text-stroke:0.55px #fff;left:549.80px;transform-origin:0 25px;transform:scaleX(0.9695);">Jun 26, 2023</div>
<div class="t" style="top:753px;font-size:14.5px;color:#fff;-webkit-text-stroke:0.55px #fff;right:1103.20px;transform-origin:100% 25px;transform:scaleX(0.9672);">587,572</div>
<div class="t" style="top:753px;font-size:14.5px;color:#fff;-webkit-text-stroke:0.55px #fff;right:835.00px;transform-origin:100% 25px;transform:scaleX(0.9626);">16,018</div>
<svg style="left:35px;top:808px" width="62" height="35" viewBox="0 0 62 35"><defs><clipPath id="tc3"><rect x="21" y="0" width="20.2" height="35"/></clipPath></defs><rect width="62" height="35" fill="#6b6d6f"/><g clip-path="url(#tc3)"><g style="filter:blur(0.45px)"><rect x="21" y="0" width="20.2" height="35" fill="#8b8b8c"/><rect x="21" y="0" width="5" height="25.5" fill="#cfcfd1"/><rect x="36.6" y="0" width="4.6" height="26" fill="#d7d7d7"/><rect x="21" y="26.4" width="20.2" height="8.6" fill="#9d9d9c"/><rect x="29" y="2" width="1.6" height="3.4" fill="#5c5c5c"/><rect x="21.4" y="13" width="1.4" height="9" fill="#6a6a6c"/><rect x="25.8" y="15" width="13.2" height="11.8" fill="#3f8fd1"/><rect x="27" y="18" width="10" height="0.8" fill="#66a9dd"/><ellipse cx="28.6" cy="22.4" rx="2.2" ry="4.6" fill="#c98c52"/><ellipse cx="28.6" cy="19.4" rx="1.6" ry="1.6" fill="#d9a566"/></g></g></svg>
<div class="t sg" style="top:806px;font-size:14.5px;color:#3ea6ff;left:114.70px;"><span style="width:58.80px;transform:scaleX(0.9527);transform-origin:0 25px;">Réponse </span><span style="width:11.50px;transform:scaleX(0.9302);transform-origin:0 25px;">à </span><span style="width:115.60px;transform:scaleX(0.9731);transform-origin:0 25px;">@theenadiamarie </span><span style="width:40.20px;transform:scaleX(1.0150);transform-origin:0 25px;">#chat </span><span style="width:32.10px;transform:scaleX(1.0253);transform-origin:0 25px;">#cat </span><span style="width:93.80px;transform:scaleX(1.0035);transform-origin:0 25px;">#catchallenge </span><span style="width:36.80px;transform:scaleX(0.8921);transform-origin:0 25px;">#cat…</span></div>
<div class="t" style="top:806px;font-size:14.5px;color:#fff;-webkit-text-stroke:0.55px #fff;left:549.80px;transform-origin:0 25px;transform:scaleX(0.9695);">Jun 21, 2023</div>
<div class="t" style="top:806px;font-size:14.5px;color:#fff;-webkit-text-stroke:0.55px #fff;right:1103.20px;transform-origin:100% 25px;transform:scaleX(0.9626);">19,099</div>
<div class="t" style="top:806px;font-size:14.5px;color:#fff;-webkit-text-stroke:0.55px #fff;right:835.00px;transform-origin:100% 25px;transform:scaleX(0.9792);">639</div>
<svg style="left:35px;top:861px" width="62" height="35" viewBox="0 0 62 35"><defs><clipPath id="tc4"><rect x="21" y="0" width="20.2" height="35"/></clipPath></defs><rect width="62" height="35" fill="#70655a"/><g clip-path="url(#tc4)"><g style="filter:blur(0.45px)"><rect x="21" y="0" width="20.2" height="35" fill="#d0d0cd"/><rect x="21" y="28" width="20.2" height="7" fill="#a4a09c"/><path d="M30.2 0.4L38.6 11.6V27.6H23.2V11.6Z" fill="#9c8570"/><rect x="21" y="0" width="1.6" height="27" fill="#e2e2e0"/><rect x="29" y="4.4" width="3" height="1.2" fill="#d6c9b6"/><rect x="25" y="15" width="3.4" height="1.2" fill="#ddd1bf"/><rect x="33" y="15" width="3.4" height="1.2" fill="#ddd1bf"/><rect x="25.4" y="20" width="2.4" height="1" fill="#d6c9b6"/><rect x="25.4" y="25" width="2.8" height="1" fill="#d6c9b6"/><path d="M30 21L32 21L37.6 27L35.4 30.6L31 26Z" fill="#b67a40"/></g></g></svg>
<div class="t sg" style="top:858px;font-size:14.5px;color:#3ea6ff;left:114.70px;"><span style="width:58.80px;transform:scaleX(0.9527);transform-origin:0 25px;">Réponse </span><span style="width:11.50px;transform:scaleX(0.9302);transform-origin:0 25px;">à </span><span style="width:80.60px;transform:scaleX(0.9636);transform-origin:0 25px;">@kapoukyai </span><span style="width:27.30px;transform:scaleX(0.9526);transform-origin:0 25px;">The </span><span style="width:25.40px;transform:scaleX(0.9529);transform-origin:0 25px;">Cat </span><span style="width:43.85px;transform:scaleX(0.9732);transform-origin:0 25px;">House </span><span class="emo" style="width:19.70px;">😺</span><span style="width:4.85px;"> </span><span style="width:32.10px;transform:scaleX(1.0253);transform-origin:0 25px;">#cat </span><span style="width:40.20px;transform:scaleX(1.0150);transform-origin:0 25px;">#chat </span><span style="width:37.90px;transform:scaleX(0.9009);transform-origin:0 25px;">#fun…</span></div>
<div class="t" style="top:858px;font-size:14.5px;color:#fff;-webkit-text-stroke:0.55px #fff;left:549.80px;transform-origin:0 25px;transform:scaleX(0.9410);">Sep 5, 2023</div>
<div class="t" style="top:858px;font-size:14.5px;color:#fff;-webkit-text-stroke:0.55px #fff;right:1103.20px;transform-origin:100% 25px;transform:scaleX(0.9643);">4,354</div>
<div class="t" style="top:858px;font-size:14.5px;color:#fff;-webkit-text-stroke:0.55px #fff;right:835.00px;transform-origin:100% 25px;transform:scaleX(0.9727);">70</div>
<svg style="left:35px;top:913px" width="62" height="35" viewBox="0 0 62 35"><defs><clipPath id="tc5"><rect x="21" y="0" width="20.2" height="35"/></clipPath></defs><rect width="62" height="35" fill="#7b593d"/><g clip-path="url(#tc5)"><g style="filter:blur(0.45px)"><rect x="21" y="0" width="20.2" height="35" fill="#c3a88e"/><rect x="21" y="29" width="20.2" height="6" fill="#a69c90"/><rect x="21" y="0" width="2.6" height="29" fill="#e6dfd2"/><ellipse cx="35" cy="4" rx="3" ry="4" fill="#e6d8c4"/><rect x="37.4" y="0" width="0.8" height="9" fill="#8f6f55"/><ellipse cx="36" cy="9.6" rx="1.8" ry="1.8" fill="#5e4a3a"/><path d="M35.6 10.6L40.4 10.6L40.6 28L38 28L36.4 20Z" fill="#2d2e2c"/><ellipse cx="35" cy="22.6" rx="1.6" ry="1.2" fill="#c8767a"/><ellipse cx="27" cy="26" rx="2.6" ry="2.8" fill="#d9a441"/><rect x="29" y="28.2" width="9" height="1" fill="#b9923f"/></g></g></svg>
<div class="t sg" style="top:911px;font-size:14.5px;color:#3ea6ff;left:114.70px;"><span style="width:142.60px;transform:scaleX(0.9829);transform-origin:0 25px;">toi aussi tu as été ému</span><span style="width:3.85px;"> </span><span class="emo" style="width:19.70px;">🥺</span><span class="emo" style="width:19.70px;">🥺</span><span style="width:4.45px;"> </span><span style="width:35.70px;transform:scaleX(1.0061);transform-origin:0 25px;">#chat</span></div>
<div class="t" style="top:911px;font-size:14.5px;color:#fff;-webkit-text-stroke:0.55px #fff;left:549.80px;transform-origin:0 25px;transform:scaleX(0.9410);">Sep 3, 2023</div>
<div class="t" style="top:911px;font-size:14.5px;color:#fff;-webkit-text-stroke:0.55px #fff;right:1103.20px;transform-origin:100% 25px;transform:scaleX(0.9643);">3,236</div>
<div class="t" style="top:911px;font-size:14.5px;color:#fff;-webkit-text-stroke:0.55px #fff;right:835.00px;transform-origin:100% 25px;transform:scaleX(0.9727);">21</div>
<svg style="left:35px;top:966px" width="62" height="35" viewBox="0 0 62 35"><defs><clipPath id="tc6"><rect x="21" y="0" width="20.2" height="35"/></clipPath></defs><rect width="62" height="35" fill="#7e5c3b"/><g clip-path="url(#tc6)"><g style="filter:blur(0.45px)"><rect x="21" y="0" width="20.2" height="35" fill="#b99b7c"/><rect x="21" y="29.6" width="20.2" height="5.4" fill="#aaa298"/><rect x="33.4" y="0" width="1.6" height="28" fill="#5e3f2a"/><rect x="35" y="0" width="6.2" height="29.6" fill="#d6c6ae"/><rect x="36" y="0" width="3" height="7" fill="#efe6d6"/><path d="M22 4.2H32L31 9H23.6Z" fill="#ebebeb"/><rect x="28" y="8" width="2.4" height="1" fill="#e3b94e"/><ellipse cx="37.8" cy="9.4" rx="2.2" ry="1.8" fill="#3a3836"/><rect x="36.4" y="11.6" width="4.8" height="17" fill="#e9e5dd"/><rect x="39.6" y="11" width="1.6" height="10" fill="#3d3d3d"/><ellipse cx="37" cy="24.6" rx="1.6" ry="1.2" fill="#c79a86"/><ellipse cx="23.8" cy="26.8" rx="2.8" ry="2.2" fill="#d9a746"/><rect x="26" y="28.6" width="14" height="1.1" fill="#c3973f"/></g></g></svg>
<div class="t sg" style="top:964px;font-size:14.5px;color:#3ea6ff;left:114.70px;"><span style="width:40.30px;transform:scaleX(1.0178);transform-origin:0 25px;">#chat </span><span style="width:32.30px;transform:scaleX(1.0253);transform-origin:0 25px;">#cat </span><span style="width:32.70px;transform:scaleX(1.0170);transform-origin:0 25px;">#pet </span><span style="width:40.00px;transform:scaleX(1.0093);transform-origin:0 25px;">#pets </span><span style="width:55.60px;transform:scaleX(1.0161);transform-origin:0 25px;">#animal </span><span style="width:88.15px;transform:scaleX(1.0447);transform-origin:0 25px;">#catsoftiktok </span><span style="width:61.45px;transform:scaleX(1.0038);transform-origin:0 25px;">#humour </span><span style="width:39.20px;transform:scaleX(0.8817);transform-origin:0 25px;">#syd…</span></div>
<div class="t" style="top:964px;font-size:14.5px;color:#fff;-webkit-text-stroke:0.55px #fff;left:549.80px;transform-origin:0 25px;transform:scaleX(0.9410);">Sep 4, 2023</div>
<div class="t" style="top:964px;font-size:14.5px;color:#fff;-webkit-text-stroke:0.55px #fff;right:1103.20px;transform-origin:100% 25px;transform:scaleX(0.9643);">2,904</div>
<div class="t" style="top:964px;font-size:14.5px;color:#fff;-webkit-text-stroke:0.55px #fff;right:835.00px;transform-origin:100% 25px;transform:scaleX(0.9727);">43</div>
<svg style="left:35px;top:1019px" width="62" height="35" viewBox="0 0 62 35"><defs><clipPath id="tc7"><rect x="21" y="0" width="20.2" height="35"/></clipPath></defs><rect width="62" height="35" fill="#8a6d30"/><g clip-path="url(#tc7)"><g style="filter:blur(0.45px)"><rect x="21" y="0" width="20.2" height="35" fill="#d1d1d3"/><rect x="26.6" y="2.4" width="12" height="10" fill="#c4c4c6"/><ellipse cx="29.6" cy="6.6" rx="1" ry="1" fill="#4a4a4a"/><rect x="21" y="4" width="1" height="6" fill="#4e4a40"/></g></g></svg>
<div class="t sg" style="top:1017px;font-size:14.5px;color:#3ea6ff;left:114.70px;"><span style="width:369.00px;transform:scaleX(0.9434);transform-origin:0 25px;">Réponse à @chamodmadura #chat #cat #catsoftiktok #cat…</span></div>
<div class="t" style="top:1017px;font-size:14.5px;color:#fff;-webkit-text-stroke:0.55px #fff;left:549.80px;transform-origin:0 25px;transform:scaleX(0.9410);">Sep 1, 2023</div>
<div class="t" style="top:1017px;font-size:14.5px;color:#fff;-webkit-text-stroke:0.55px #fff;right:1103.20px;transform-origin:100% 25px;transform:scaleX(0.9643);">2,808</div>
<div class="t" style="top:1017px;font-size:14.5px;color:#fff;-webkit-text-stroke:0.55px #fff;right:835.00px;transform-origin:100% 25px;transform:scaleX(0.9727);">39</div>
<svg style="left:0;top:0" width="1920" height="1032" viewBox="0 0 1920 1032"><path d="M842.90 678.00V658.97H845.16V664.94H847.42V662.03H849.67V663.14H851.93V667.03H854.19V668.97H856.45V672.86H858.71V672.86H860.97V673.97H863.23V672.03H865.48V672.03H867.74V672.03H870.00V666.06H872.26V667.03H874.52V667.03H876.77V662.03H879.03V660.08H881.29V663.97H883.55V663.97H885.81V661.06H888.07V655.92H890.32V655.92H892.58V664.94H894.84V663.00H897.10V666.06H899.36V670.08H901.62V668.00H903.88V670.08H906.13V668.97H908.39V672.03H910.65V672.86H912.91V674.94H915.17V674.94H917.42V674.94H919.68V674.94H921.94V672.86H924.20V672.86H926.46V670.08H928.72V670.92H930.97V668.97H933.23V668.97H935.49V666.06H937.75V668.00H940.01V664.94H942.27V667.03H944.52V663.97H946.78V667.03H949.04V666.06H951.30V678.00ZM842.90 731.00V716.28H845.16V722.94H847.42V719.19H849.67V719.19H851.93V722.94H854.19V722.94H856.45V726.00H858.71V726.00H860.97V726.83H863.23V725.31H865.48V726.00H867.74V726.00H870.00V722.25H872.26V725.03H874.52V725.03H876.77V722.25H879.03V722.25H881.29V724.33H883.55V724.33H885.81V722.25H888.07V720.17H890.32V720.17H892.58V722.94H894.84V719.19H897.10V720.17H899.36V724.33H901.62V722.25H903.88V725.03H906.13V724.33H908.39V724.33H910.65V724.33H912.91V726.00H915.17V726.83H917.42V726.00H919.68V726.83H921.94V725.31H924.20V726.00H926.46V724.33H928.72V726.00H930.97V724.33H933.23V725.03H935.49V723.22H937.75V725.03H940.01V722.25H942.27V724.33H944.52V722.25H946.78V725.03H949.04V723.22H951.30V731.00ZM842.90 784.00V775.25H845.16V779.14H847.42V779.14H849.67V779.14H851.93V780.11H854.19V780.11H856.45V781.92H858.71V781.92H860.97V781.22H863.23V780.11H865.48V780.94H867.74V780.94H870.00V779.14H872.26V780.94H874.52V780.94H876.77V779.14H879.03V777.06H881.29V778.17H883.55V778.17H885.81V777.06H888.07V775.94H890.32V775.94H892.58V777.75H894.84V775.94H897.10V775.94H899.36V778.17H901.62V779.14H903.88V781.22H906.13V781.22H908.39V781.22H910.65V781.22H912.91V781.22H915.17V781.92H917.42V781.22H919.68V781.22H921.94V779.14H924.20V780.11H926.46V779.14H928.72V780.11H930.97V779.14H933.23V779.14H935.49V775.94H937.75V777.75H940.01V775.94H942.27V777.75H944.52V777.06H946.78V778.17H949.04V775.94H951.30V784.00ZM1112.10 678.00V657.58H1113.90V656.33H1115.71V656.94H1117.51V657.46H1119.32V658.64H1121.12V659.20H1122.93V658.78H1124.73V659.89H1126.54V659.47H1128.35V659.96H1130.15V660.60H1131.95V660.26H1133.76V661.04H1135.57V660.99H1137.37V662.04H1139.17V661.57H1140.98V662.61H1142.78V663.12H1144.59V662.66H1146.39V663.73H1148.20V663.27H1150.00V663.65H1151.81V664.16H1153.62V663.70H1155.42V664.30H1157.22V664.01H1159.03V664.83H1160.84V664.13H1162.64V664.95H1164.44V665.35H1166.25V664.78H1168.06V665.74H1169.86V665.15H1171.66V665.38H1173.47V665.75H1175.28V665.14H1177.08V665.65H1178.88V665.32H1180.69V666.11H1182.50V665.30H1184.30V664.37H1186.11V664.42H1187.91V664.90H1189.72V665.78H1191.52V665.08H1193.33V665.22H1195.13V665.50H1196.93V664.81H1198.74V665.22H1200.55V664.81H1202.35V665.21H1204.15V663.29H1205.96V663.73H1207.77V665.31H1209.57V664.74H1211.38V664.09H1213.18V663.35H1214.99V663.96H1216.79V664.71H1218.60V664.54H1220.40V678.00ZM1112.10 731.00V717.91H1113.90V717.15H1115.71V717.50H1117.51V716.32H1119.32V716.67H1121.12V717.08H1122.93V717.83H1124.73V720.11H1126.54V719.40H1128.35V718.46H1130.15V719.54H1131.95V720.44H1133.76V720.86H1135.57V720.44H1137.37V721.28H1139.17V720.77H1140.98V721.80H1142.78V722.40H1144.59V722.04H1146.39V723.20H1148.20V722.83H1150.00V723.30H1151.81V723.90H1153.62V722.97H1155.42V723.13H1157.22V722.46H1159.03V722.89H1160.84V721.80H1162.64V722.42H1164.44V722.74H1166.25V722.10H1168.06V722.98H1169.86V722.34H1171.66V722.52H1173.47V722.85H1175.28V722.21H1177.08V722.65H1178.88V722.08H1180.69V722.63H1182.50V721.64H1184.30V722.19H1186.11V722.31H1187.91V721.47H1189.72V722.15H1191.52V721.31H1193.33V721.30H1195.13V721.70H1196.93V721.16H1198.74V721.73H1200.55V721.47H1202.35V722.33H1204.15V721.65H1205.96V722.08H1207.77V721.94H1209.57V721.12H1211.38V722.23H1213.18V721.82H1214.99V722.24H1216.79V722.80H1218.60V722.39H1220.40V731.00ZM1112.10 784.00V771.83H1113.90V771.24H1115.71V771.77H1117.51V770.76H1119.32V770.72H1121.12V769.63H1122.93V770.96H1124.73V772.18H1126.54V771.28H1128.35V771.24H1130.15V772.00H1131.95V771.79H1133.76V772.69H1135.57V772.75H1137.37V773.93H1139.17V773.57H1140.98V774.69H1142.78V774.97H1144.59V774.28H1146.39V775.11H1148.20V774.42H1150.00V774.56H1151.81V774.83H1153.62V774.14H1155.42V774.56H1157.22V774.14H1159.03V774.84H1160.84V774.09H1162.64V774.87H1164.44V775.24H1166.25V774.63H1168.06V775.55H1169.86V774.94H1171.66V775.16H1173.47V775.52H1175.28V774.91H1177.08V775.42H1178.88V775.08H1180.69V775.86H1182.50V775.10H1184.30V775.57H1186.11V775.62H1187.91V774.70H1189.72V775.31H1191.52V774.39H1193.33V774.30H1195.13V774.36H1196.93V773.44H1198.74V773.63H1200.55V773.17H1202.35V773.86H1204.15V773.03H1205.96V773.72H1207.77V774.00H1209.57V773.31H1211.38V774.14H1213.18V774.24H1214.99V774.97H1216.79V775.25H1218.60V774.56H1220.40V784.00Z" fill="#41b4d9"/><path d="M951.3 678.00V672.03H954V678.00ZM951.3 731.00V727.11H954V731.00ZM951.3 784.00V780.11H954V784.00Z" fill="#3b6f82"/><rect x="842.9" y="835.00" width="108.4" height="2" fill="#41b4d9"/><rect x="951.3" y="835.00" width="2.7" height="2" fill="#3b6f82"/><rect x="1112.1" y="835.00" width="108.3" height="2" fill="#41b4d9"/><rect x="842.9" y="888.00" width="111.1" height="1" fill="#454545"/><rect x="935.0" y="887.80" width="16.3" height="1.2" fill="#41b4d9"/><rect x="842.9" y="941.00" width="108.4" height="1" fill="#41b4d9"/><rect x="951.3" y="941.00" width="2.7" height="1" fill="#3b6f82"/><rect x="842.9" y="993.40" width="111.1" height="1.6" fill="#454545"/><rect x="885.0" y="993.00" width="66.3" height="2" fill="#41b4d9"/><rect x="951.3" y="993.00" width="2.7" height="2" fill="#3b6f82"/><rect x="1112.1" y="888.40" width="108.3" height="0.6" fill="#454545"/><rect x="1111.9" y="887.90" width="1.7" height="1.1" fill="#41b4d9"/><rect x="1116.1" y="887.90" width="2.1" height="1.1" fill="#41b4d9"/><rect x="1120.8" y="887.90" width="2.1" height="1.1" fill="#41b4d9"/><rect x="1127.9" y="887.90" width="5.3" height="1.1" fill="#41b4d9"/><rect x="1134.7" y="887.90" width="4.5" height="1.1" fill="#41b4d9"/><rect x="1143.0" y="887.90" width="3.0" height="1.1" fill="#41b4d9"/><rect x="1148.2" y="887.90" width="21.8" height="1.1" fill="#41b4d9"/><rect x="1172.1" y="887.90" width="6.8" height="1.1" fill="#41b4d9"/><rect x="1181.1" y="887.90" width="2.1" height="1.1" fill="#41b4d9"/><rect x="1184.9" y="887.90" width="9.2" height="1.1" fill="#41b4d9"/><rect x="1196.2" y="887.90" width="5.3" height="1.1" fill="#41b4d9"/><rect x="1205.2" y="887.90" width="1.5" height="1.1" fill="#41b4d9"/><rect x="1209.0" y="887.90" width="7.0" height="1.1" fill="#41b4d9"/><rect x="1217.8" y="887.90" width="2.6" height="1.1" fill="#41b4d9"/><rect x="1112.1" y="941.30" width="108.3" height="0.7" fill="#454545"/><rect x="1116.8" y="940.90" width="2.1" height="1.1" fill="#41b4d9"/><rect x="1131.9" y="940.90" width="2.1" height="1.1" fill="#41b4d9"/><rect x="1139.0" y="940.90" width="1.7" height="1.1" fill="#41b4d9"/><rect x="1148.2" y="940.90" width="6.0" height="1.1" fill="#41b4d9"/><rect x="1156.7" y="940.90" width="3.4" height="1.1" fill="#41b4d9"/><rect x="1161.6" y="940.90" width="3.6" height="1.1" fill="#41b4d9"/><rect x="1166.7" y="940.90" width="1.7" height="1.1" fill="#41b4d9"/><rect x="1170.0" y="940.90" width="1.7" height="1.1" fill="#41b4d9"/><rect x="1185.1" y="940.90" width="2.6" height="1.1" fill="#41b4d9"/><rect x="1188.7" y="940.90" width="3.2" height="1.1" fill="#41b4d9"/><rect x="1216.1" y="940.90" width="4.3" height="1.1" fill="#41b4d9"/><rect x="1112.1" y="993.40" width="109.9" height="1.6" fill="#454545"/><rect x="1113.6" y="993.00" width="1.7" height="2" fill="#41b4d9"/><rect x="1118.7" y="993.00" width="2.6" height="2" fill="#41b4d9"/><rect x="1122.8" y="993.00" width="3.6" height="2" fill="#41b4d9"/><rect x="1130.0" y="993.00" width="1.9" height="2" fill="#41b4d9"/><rect x="1133.2" y="993.00" width="2.1" height="2" fill="#41b4d9"/><rect x="1136.9" y="993.00" width="3.8" height="2" fill="#41b4d9"/><rect x="1142.6" y="993.00" width="2.6" height="2" fill="#41b4d9"/><rect x="1154.2" y="993.00" width="6.8" height="2" fill="#41b4d9"/><rect x="1163.1" y="993.00" width="6.8" height="2" fill="#41b4d9"/><rect x="1173.8" y="993.00" width="2.6" height="2" fill="#41b4d9"/><rect x="1178.9" y="993.00" width="2.1" height="2" fill="#41b4d9"/><rect x="1184.9" y="993.00" width="2.1" height="2" fill="#41b4d9"/><rect x="1188.1" y="993.00" width="2.1" height="2" fill="#41b4d9"/><rect x="1194.1" y="993.00" width="2.1" height="2" fill="#41b4d9"/><rect x="1197.7" y="993.00" width="1.7" height="2" fill="#41b4d9"/><rect x="1201.1" y="993.00" width="2.1" height="2" fill="#41b4d9"/><rect x="1207.1" y="993.00" width="3.0" height="2" fill="#41b4d9"/><rect x="1212.2" y="993.00" width="6.0" height="2" fill="#41b4d9"/></svg>
<!-- ===== Windows taskbar ===== -->
<div id="taskbar" class="abs"></div>
<!-- start -->
<svg style="left:685px;top:1045px" width="23" height="23" viewBox="0 0 23 23"><defs><linearGradient id="wg" x1="0" y1="0" x2="1" y2="1"><stop offset="0" stop-color="#7fe6ff"/><stop offset="0.5" stop-color="#3cc3fb"/><stop offset="1" stop-color="#159bf0"/></linearGradient></defs><path d="M0 0H11V11H0ZM12 0H23V11H12ZM0 12H11V23H0ZM12 12H23V23H12Z" fill="url(#wg)"/></svg>
<!-- search -->
<svg style="left:728px;top:1044px" width="26" height="26" viewBox="0 0 26 26"><circle cx="14.2" cy="10.8" r="8.3" fill="#3b404b" stroke="#ededed" stroke-width="2.4"/><path d="M8.4 17 L3.2 22.4" stroke="#d8d8d8" stroke-width="2.8" stroke-linecap="round"/></svg>
<!-- task view -->
<svg style="left:773px;top:1045px" width="24" height="23" viewBox="0 0 24 23"><rect x="6" y="0" width="18" height="16" rx="1.5" fill="#f2f2f2"/><rect x="0" y="6" width="18" height="16" rx="1.5" fill="#6b6b6b" fill-opacity="0.92"/><rect x="6" y="6" width="12" height="10" fill="#bdbdbd"/></svg>
<!-- widgets -->
<svg style="left:817px;top:1045px" width="24" height="22" viewBox="0 0 24 22"><rect x="0" y="0" width="24" height="22" rx="1.5" fill="#0d5cb6"/><rect x="2" y="2" width="9" height="18" rx="1" fill="#f7f9fb"/><rect x="13" y="2" width="9" height="9.5" rx="0.5" fill="#5fd0fb"/><rect x="13" y="12.5" width="9" height="4" fill="#1f9df2"/><rect x="13" y="17" width="9" height="3" fill="#0f7fe0"/></svg>
<!-- chat -->
<svg style="left:860px;top:1044px" width="25" height="25" viewBox="0 0 25 25"><defs><linearGradient id="cg" x1="0" y1="0" x2="1" y2="1"><stop offset="0" stop-color="#8f7ae6"/><stop offset="1" stop-color="#5b52c9"/></linearGradient></defs><circle cx="12.8" cy="11.8" r="11.4" fill="url(#cg)"/><path d="M1.6 23.4 L3.6 16 L9.6 21.6Z" fill="#6a5fd2"/><rect x="6.2" y="8" width="9.6" height="7.6" rx="1.6" fill="#fff"/><path d="M16.4 11.8 L19.4 9 V14.6Z" fill="#fff"/></svg>
<!-- explorer -->
<svg style="left:905px;top:1045px" width="24" height="23" viewBox="0 0 24 23"><path d="M0 2 Q0 0.6 1.4 0.6 H8 L10.4 3.4 H22.6 Q24 3.4 24 4.8 V20.4 Q24 21.6 22.8 21.6 H1.2 Q0 21.6 0 20.4Z" fill="#e8a91f"/><path d="M0 5.2 H22.8 Q24 5.2 24 6.4 V20.4 Q24 21.6 22.8 21.6 H1.2 Q0 21.6 0 20.4Z" fill="#fdd04f"/><path d="M4 21.6 V17 Q4 15 6 15 H18 Q20 15 20 17 V21.6Z" fill="#1d8ee6"/><rect x="7.4" y="17.6" width="9.2" height="1.8" rx="0.9" fill="#1668b4"/></svg>
<!-- store -->
<svg style="left:949px;top:1044px" width="23" height="24" viewBox="0 0 23 24"><path d="M6 5 V2.6 Q6 1 7.6 1 H15.4 Q17 1 17 2.6 V5" stroke="#29a7f2" stroke-width="1.9" fill="none"/><path d="M0 5 H23 V21 Q23 24 20 24 H3 Q0 24 0 21Z" fill="#f4f4f4"/><rect x="7" y="9.4" width="4" height="4" fill="#f25022"/><rect x="12" y="9.4" width="4" height="4" fill="#7fba00"/><rect x="7" y="14.4" width="4" height="4" fill="#00a4ef"/><rect x="12" y="14.4" width="4" height="4" fill="#ffb900"/></svg>
<!-- garena -->
<svg style="left:993px;top:1044px" width="24" height="24" viewBox="0 0 24 24"><rect width="24" height="24" rx="1.6" fill="#050505"/><path d="M3 10 Q8 5.4 14 3.2 Q11.6 5.4 11.4 6.4 Q17 6.6 22.6 8 Q18.6 9.4 13 9.6 Q8.4 10.4 7 13.4 Q6 17.6 10 18.8 Q13.6 19.2 14.6 17 Q12.4 17.8 11 16.4 Q10 14.6 12 13.6 Q14 13 15.4 14 L20 12.6 Q19.4 16 17.4 18.4 Q14 21 9.6 20.4 Q4.4 19 4.6 14 Q4.8 11.4 6.6 9.6Z" fill="#e01f2b"/></svg>
<!-- opera -->
<svg style="left:1037px;top:1044px" width="24" height="24" viewBox="0 0 24 24"><defs><linearGradient id="og" x1="0" y1="0" x2="1" y2="1"><stop offset="0" stop-color="#ff1b2d"/><stop offset="0.5" stop-color="#d50f22"/><stop offset="1" stop-color="#ff4a4a"/></linearGradient></defs><ellipse cx="11.8" cy="11.8" rx="11.4" ry="11.4" fill="url(#og)"/><ellipse cx="12.2" cy="11.85" rx="5.7" ry="8.25" fill="#1c2123"/></svg>
<!-- chrome 1 -->
<svg style="left:1080px;top:1040px" width="32" height="36" viewBox="0 0 32 36"><g transform="translate(12.7 16)"><circle r="12" fill="#fff"/><path d="M0 -6.25 L10.244 -6.25 A12 12 0 0 0 -10.535 -5.746 L-5.413 3.125 A6.25 6.25 0 0 1 0 -6.25Z" fill="#e8402f"/><path d="M0 -6.25 L10.244 -6.25 A12 12 0 0 1 0.291 11.996 L5.413 3.125 A6.25 6.25 0 0 0 0 -6.25Z" fill="#fbbd14"/><path d="M-5.413 3.125 L-10.535 -5.746 A12 12 0 0 0 0.291 11.996 L5.413 3.125 A6.25 6.25 0 0 1 -5.413 3.125Z" fill="#2fa44f"/><circle r="6.2" fill="#fff"/><circle r="5" fill="#3f84f0"/></g><circle cx="20.6" cy="7.6" r="8.3" fill="#8d6e63"/><rect x="10" y="32.2" width="6" height="2.8" rx="1.4" fill="#9a9c9c"/></svg>
<!-- lol 1 -->
<svg style="left:1125px;top:1043px" width="24" height="33" viewBox="0 0 24 33"><defs><linearGradient id="lg1" x1="0" y1="0" x2="0" y2="1"><stop offset="0" stop-color="#06213f"/><stop offset="1" stop-color="#0e3d62"/></linearGradient></defs><circle cx="11.9" cy="12.3" r="9.6" fill="url(#lg1)" stroke="#c8992f" stroke-width="1.1"/><path d="M5.6 1.8 L11.2 1.8 L11.2 19 L19.4 19 L17.6 23.1 L5.8 23.1 L6.9 21 L6.9 4.2Z" fill="#dba640"/><path d="M7.6 3 H9.6 V21 H7.6Z" fill="#f3d88c" fill-opacity="0.6"/><path d="M6.4 21.6 H17.6" stroke="#b9822a" stroke-width="0.8"/><rect x="8.9" y="29.2" width="6.1" height="2.8" rx="1.4" fill="#9a9c9c"/></svg>
<!-- lol 2 -->
<svg style="left:1169px;top:1043px" width="24" height="33" viewBox="0 0 24 33"><defs><radialGradient id="lg2" cx="0.6" cy="0.6" r="0.6"><stop offset="0" stop-color="#19c3d6"/><stop offset="0.6" stop-color="#1786b0"/><stop offset="1" stop-color="#0c4f80"/></radialGradient></defs><circle cx="11.9" cy="12.3" r="9.6" fill="url(#lg2)" stroke="#c8992f" stroke-width="1.1"/><path d="M5.6 1.8 L11.2 1.8 L11.2 19 L19.4 19 L17.6 23.1 L5.8 23.1 L6.9 21 L6.9 4.2Z" fill="#dba640"/><path d="M7.6 3 H9.6 V21 H7.6Z" fill="#f3d88c" fill-opacity="0.6"/><path d="M6.4 21.6 H17.6" stroke="#b9822a" stroke-width="0.8"/><rect x="8.9" y="29.2" width="6.1" height="2.8" rx="1.4" fill="#9a9c9c"/></svg>
<!-- chrome 2 (active) -->
<div class="abs" style="left:1205px;top:1036px;width:40px;height:40px;border-radius:4px;background:rgba(255,255,255,0.07);border:1px solid rgba(255,255,255,0.05)"></div>
<svg style="left:1212px;top:1040px" width="32" height="36" viewBox="0 0 32 36"><g transform="translate(12.7 16)"><circle r="12" fill="#fff"/><path d="M0 -6.25 L10.244 -6.25 A12 12 0 0 0 -10.535 -5.746 L-5.413 3.125 A6.25 6.25 0 0 1 0 -6.25Z" fill="#e8402f"/><path d="M0 -6.25 L10.244 -6.25 A12 12 0 0 1 0.291 11.996 L5.413 3.125 A6.25 6.25 0 0 0 0 -6.25Z" fill="#fbbd14"/><path d="M-5.413 3.125 L-10.535 -5.746 A12 12 0 0 0 0.291 11.996 L5.413 3.125 A6.25 6.25 0 0 1 -5.413 3.125Z" fill="#2fa44f"/><circle r="6.2" fill="#fff"/><circle r="5" fill="#3f84f0"/></g><circle cx="21.7" cy="7.2" r="8.3" fill="#5f9f37"/><rect x="5" y="32.2" width="16" height="2.8" rx="1.4" fill="#dc9be9"/></svg>
<div class="abs" style="left:1884px;top:1048px;width:16px;height:16px;border-radius:50%;background:#d9a0e8"></div>
<div class="t ui" style="top:1027px;font-size:9px;color:#efe6e3;left:1098.40px;transform-origin:0 23px;transform:scaleX(1.0306);">A</div>
<div class="t ui" style="top:1027px;font-size:9px;color:#eef4e8;left:1230.40px;transform-origin:0 23px;transform:scaleX(0.9067);">M</div>
<div class="t ui" style="top:1037px;font-size:11.5px;color:#fff;-webkit-text-stroke:0.25px #fff;left:1713.60px;transform-origin:0 24px;transform:scaleX(0.9108);">ENG</div>
<div class="t ui" style="top:1028px;font-size:11.5px;color:#fff;-webkit-text-stroke:0.25px #fff;right:47.70px;transform-origin:100% 24px;transform:scaleX(0.9607);">10:44 PM</div>
<div class="t ui" style="top:1044px;font-size:11.5px;color:#fff;-webkit-text-stroke:0.25px #fff;right:47.70px;transform-origin:100% 24px;transform:scaleX(1.0649);">05/09/2023</div>
<div class="t ui" style="top:1036px;font-size:11.5px;color:#111;left:1889.20px;transform-origin:0 24px;transform:scaleX(0.9054);">2</div>
<!-- tray -->
<svg style="left:1661px;top:1052px" width="12" height="8" viewBox="0 0 12 8"><path d="M0.6 6.8 L6 1.2 L11.4 6.8" stroke="#fff" stroke-width="1.1" fill="none"/></svg>
<svg style="left:1683px;top:1050px" width="17" height="12" viewBox="0 0 17 12"><path d="M4 11 Q0.4 11 0.4 7.8 Q0.4 5 3.4 4.6 Q4.6 1 8 1 Q11.4 1 12.4 4.2 Q16.4 4.4 16.4 7.8 Q16.4 11 13 11Z" fill="#bdbdbd"/><path d="M3 11 Q0.4 10.6 0.6 8 Q5 6 9 8 Q13 10 16 9 Q15.4 11 13 11Z" fill="#f3f3f3"/></svg>
<svg style="left:1755px;top:1048px" width="17" height="17" viewBox="0 0 17 17"><path d="M10.4 1.6 H1 Q0.5 1.6 0.5 2.1 V11 Q0.5 11.5 1 11.5 H11.5 M4 15.5 H10 M7 11.5 V15.5" stroke="#fff" stroke-width="1" fill="none"/><rect x="12.4" y="0.5" width="3.2" height="5.4" rx="1" stroke="#fff" stroke-width="1" fill="none"/><path d="M14 5.9 V15.6" stroke="#fff" stroke-width="1"/></svg>
<svg style="left:1779px;top:1048px" width="17" height="16" viewBox="0 0 17 16"><path d="M0.6 5.6 H3.4 L7 2.4 V13.6 L3.4 10.4 H0.6Z" stroke="#fff" stroke-width="1" fill="none" stroke-linejoin="round"/><path d="M9.2 5.6 Q10.4 8 9.2 10.4 M11.4 3.8 Q13.6 8 11.4 12.2 M13.6 2 Q16.6 8 13.6 14" stroke="#fff" stroke-width="1" fill="none" stroke-linecap="round"/></svg>

</body>
</html>
